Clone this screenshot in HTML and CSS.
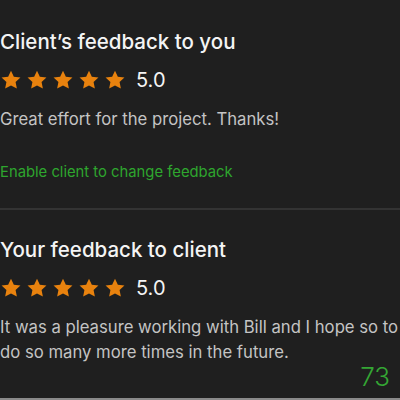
FILE: index.html
```html
<!DOCTYPE html>
<html>
<head>
<meta charset="utf-8">
<link rel="stylesheet" href="styles.css">
</head>
<body>
<div class="page">
  <section class="block first">
    <h2 class="title">Client’s feedback to you</h2>
    <div class="rating">
      <div class="stars">
        <svg class="star" viewBox="0 0 24 24"><path d="M12 1.8l3.1 6.6 7.2.9-5.3 5 1.4 7.1L12 17.9l-6.4 3.5L7 14.3l-5.3-5 7.2-.9z"/></svg>
        <svg class="star" viewBox="0 0 24 24"><path d="M12 1.8l3.1 6.6 7.2.9-5.3 5 1.4 7.1L12 17.9l-6.4 3.5L7 14.3l-5.3-5 7.2-.9z"/></svg>
        <svg class="star" viewBox="0 0 24 24"><path d="M12 1.8l3.1 6.6 7.2.9-5.3 5 1.4 7.1L12 17.9l-6.4 3.5L7 14.3l-5.3-5 7.2-.9z"/></svg>
        <svg class="star" viewBox="0 0 24 24"><path d="M12 1.8l3.1 6.6 7.2.9-5.3 5 1.4 7.1L12 17.9l-6.4 3.5L7 14.3l-5.3-5 7.2-.9z"/></svg>
        <svg class="star" viewBox="0 0 24 24"><path d="M12 1.8l3.1 6.6 7.2.9-5.3 5 1.4 7.1L12 17.9l-6.4 3.5L7 14.3l-5.3-5 7.2-.9z"/></svg>
      </div>
      <span class="score">5.0</span>
    </div>
    <p class="comment">Great effort for the project. Thanks!</p>
    <a class="link" href="#">Enable client to change feedback</a>
  </section>
  <section class="block second">
    <h2 class="title">Your feedback to client</h2>
    <div class="rating">
      <div class="stars">
        <svg class="star" viewBox="0 0 24 24"><path d="M12 1.8l3.1 6.6 7.2.9-5.3 5 1.4 7.1L12 17.9l-6.4 3.5L7 14.3l-5.3-5 7.2-.9z"/></svg>
        <svg class="star" viewBox="0 0 24 24"><path d="M12 1.8l3.1 6.6 7.2.9-5.3 5 1.4 7.1L12 17.9l-6.4 3.5L7 14.3l-5.3-5 7.2-.9z"/></svg>
        <svg class="star" viewBox="0 0 24 24"><path d="M12 1.8l3.1 6.6 7.2.9-5.3 5 1.4 7.1L12 17.9l-6.4 3.5L7 14.3l-5.3-5 7.2-.9z"/></svg>
        <svg class="star" viewBox="0 0 24 24"><path d="M12 1.8l3.1 6.6 7.2.9-5.3 5 1.4 7.1L12 17.9l-6.4 3.5L7 14.3l-5.3-5 7.2-.9z"/></svg>
        <svg class="star" viewBox="0 0 24 24"><path d="M12 1.8l3.1 6.6 7.2.9-5.3 5 1.4 7.1L12 17.9l-6.4 3.5L7 14.3l-5.3-5 7.2-.9z"/></svg>
      </div>
      <span class="score">5.0</span>
    </div>
    <p class="comment wide">It was a pleasure working with Bill and I hope so to do so many more times in the future.</p>
    <div class="counter">73</div>
  </section>
</div>
</body>
</html>
```
FILE: styles.css
```css
html, body {
  margin: 0;
  padding: 0;
  background: #1f1f1f;
}

.page {
  width: 400px;
  height: 400px;
  box-sizing: border-box;
  border-bottom: 2px solid #8a8a8a;
  overflow: hidden;
  font-family: Inter, "Liberation Sans", Arial, sans-serif;
  color: #f4f4f4;
}

.first {
  padding-top: 28px;
  padding-bottom: 27px;
  border-bottom: 2px solid #333333;
}

.second {
  padding-top: 26px;
}

.title {
  margin: 0;
  font-size: 20.5px;
  font-weight: 500;
  line-height: 28px;
}

.rating {
  display: flex;
  align-items: center;
  margin-top: 12px;
  height: 24px;
}

.stars {
  display: flex;
  gap: 4px;
}

.star {
  width: 22px;
  height: 22px;
  fill: #e8820e;
}

.score {
  margin-left: 10px;
  font-size: 20px;
  line-height: 24px;
}

.comment {
  margin: 15px 0 0;
  font-size: 16.7px;
  line-height: 24px;
  color: #c4c4c4;
}

.wide {
  margin-top: 15px;
  line-height: 25px;
  width: 400px;
}

.link {
  display: block;
  margin-top: 32px;
  font-size: 14.8px;
  line-height: 18px;
  color: #2ea62e;
  text-decoration: none;
}

.counter {
  margin-top: -3px;
  text-align: right;
  padding-right: 10px;
  font-size: 26px;
  font-weight: 300;
  line-height: 30px;
  color: #34a634;
}
```
